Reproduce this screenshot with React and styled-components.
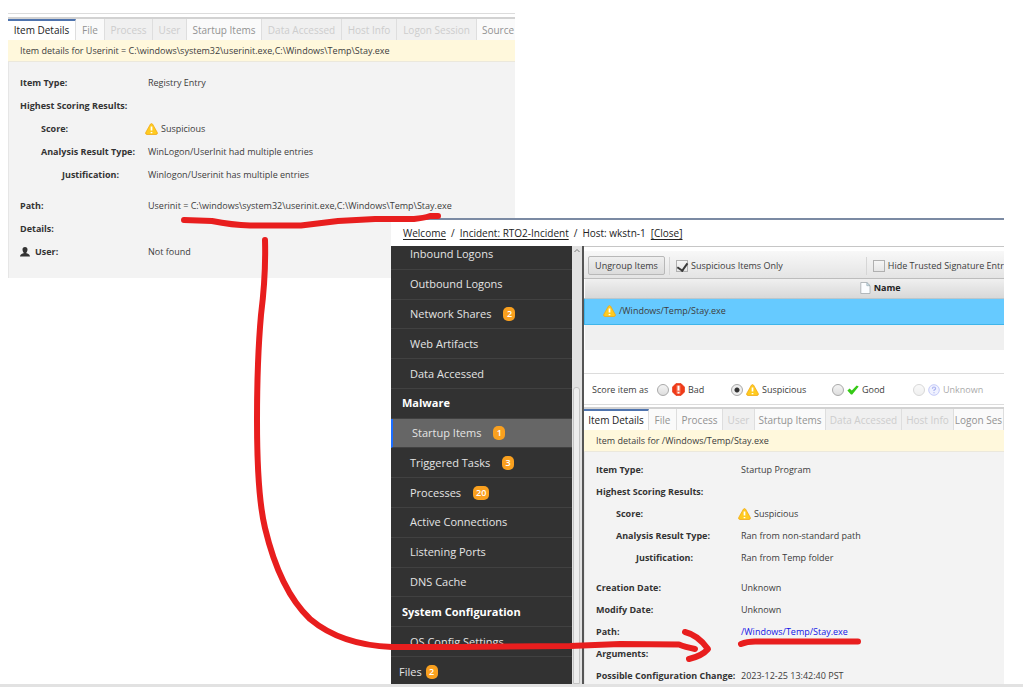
import React from 'react'
import styled, { createGlobalStyle, css } from 'styled-components'

const GlobalStyle = createGlobalStyle`
  * {
    box-sizing: border-box;
  }
  body {
    margin: 0;
    background: #fff;
    color: #3c3c3c;
    font-family: 'Open Sans', 'Noto Sans', sans-serif;
    font-size: 9px;
    line-height: 14px;
  }
  button, input {
    font: inherit;
    color: inherit;
    margin: 0;
  }
`

const Page = styled.main`
  position: relative;
  display: grid;
  grid-template-columns: 383fr 124fr 489fr;
  grid-template-rows: 205px 60px 1fr;
  min-height: 100vh;
  padding: 13px 19px 0 8px;
  border-bottom: 3px solid #e2e2e2;
`

const RegistryWindow = styled.section`
  grid-column: 1 / 3;
  grid-row: 1 / 3;
  display: flex;
  flex-direction: column;
  min-width: 0;
  overflow: hidden;
`

const IncidentWindow = styled.section`
  grid-column: 2 / 4;
  grid-row: 2 / 4;
  display: flex;
  flex-direction: column;
  min-width: 0;
  border-top: 2px solid #7b8aa3;
  background: #fff;
`

const Breadcrumb = styled.nav`
  display: flex;
  align-items: center;
  gap: 5px;
  height: 26px;
  padding: 0 12px;
  color: #222;
  font-size: 10px;
  white-space: nowrap;

  a {
    color: inherit;
    text-underline-offset: 2px;
  }
`

const Columns = styled.div`
  display: flex;
  flex: 1;
  min-height: 0;
`

const Sidebar = styled.aside`
  display: flex;
  flex-direction: column;
  flex: 0 0 181px;
  overflow: hidden;
  background: #323232;
  color: #e4e4e4;
  font-size: 11px;
`

/* scrolled a little, so the first entry is cut by the top edge */
const MenuList = styled.div`
  display: flex;
  flex-direction: column;
  flex: 1;
  margin-top: -6px;
`

const MenuItem = styled.button`
  display: flex;
  align-items: center;
  flex: 1 1 29px;
  gap: 12px;
  padding: 0 0 0 19px;
  border: 0;
  border-bottom: 1px solid #414141;
  background: none;
  text-align: left;
  white-space: nowrap;

  ${({ $active }) =>
    $active &&
    css`
      border-left: 2px solid #1a6dff;
      background: #666;
    `}
`

const MenuHeading = styled.h2`
  display: flex;
  align-items: center;
  flex: 1 1 29px;
  margin: 0;
  padding: 0 11px;
  border-bottom: 1px solid #414141;
  color: #fff;
  font-size: 11px;
  font-weight: 700;
`

const FilesButton = styled.button`
  display: flex;
  align-items: center;
  flex: 0 0 27px;
  gap: 4px;
  padding: 2px 8px 0;
  border: 0;
  background: none;
`

const Count = styled.span`
  min-width: 12px;
  padding: 0 3px;
  border-radius: 5px;
  background: #f9a01f;
  color: #fff;
  font-size: 9px;
  font-weight: 600;
  text-align: center;
`

const ScrollTrack = styled.div`
  display: flex;
  flex-direction: column;
  flex: 0 0 12px;
  border-right: 2px solid #555;
  background: #e2e2e2;

  svg {
    flex: none;
    width: 10px;
    height: 10px;
  }
`

const ScrollThumb = styled.div`
  flex: 1;
  margin: 131px 2px 0 1px;
  border: 1px solid #c4c4c4;
  border-radius: 3px 3px 0 0;
  background: #ededed;
`

const Content = styled.div`
  display: flex;
  flex-direction: column;
  flex: 1;
  min-width: 0;
  overflow: hidden;
  border-top: 1px solid #c6c6c6;
`

const Toolbar = styled.div`
  display: flex;
  align-items: center;
  height: 28px;
  margin-top: 4px;
  padding: 2px 0 0 4px;
  border-bottom: 1px solid #bdbdbd;
  background: linear-gradient(#f8f8f8, #e4e4e4);
  white-space: nowrap;
`

const ToolButton = styled.button`
  flex: none;
  width: 77px;
  height: 19px;
  padding: 0;
  border: 1px solid #b8b8b8;
  border-radius: 2px;
  background: linear-gradient(#efefef, #dcdcdc);
`

const ToolOption = styled.div`
  display: flex;
  align-items: center;
  flex: none;
  gap: 3px;
  height: 18px;
  margin-left: ${({ $far }) => ($far ? 'auto' : '4px')};
  padding-left: 6px;
  border-left: 1px solid #d6d6d6;
`

const CheckBox = styled.input`
  appearance: none;
  display: grid;
  place-items: center;
  flex: none;
  width: 12px;
  height: 12px;
  border: 1px solid #b0b0b0;
  background: linear-gradient(#f6f6f6, #e6e6e6);

  &:checked::after {
    content: '';
    width: 5px;
    height: 8px;
    margin-bottom: 3px;
    border: solid #3a3a3a;
    border-width: 0 2px 2px 0;
    transform: rotate(35deg);
  }
`

const TableFrame = styled.div`
  height: 95px;
  overflow: hidden;
  border-bottom: 1px solid #dcdcdc;
`

const ItemTable = styled.table`
  width: 141%;
  border-collapse: collapse;
  table-layout: fixed;

  th {
    height: 19px;
    padding: 0;
    border-bottom: 1px solid #b9c6cc;
    background: linear-gradient(#f0f0f0, #d8d8d8);
    color: #222;
  }
  td {
    height: 26px;
    padding: 0 0 0 18px;
  }
  tr:nth-child(even) td {
    background: #f0f0f0;
  }
  tr[aria-selected='true'] td {
    border: 1px solid #3fb5ea;
    background: #66caff;
  }
`

const IconText = styled.span`
  display: flex;
  align-items: center;
  justify-content: ${({ $centered }) => ($centered ? 'center' : 'flex-start')};
  gap: 3px;

  svg {
    flex: none;
  }
`

const ScoreBar = styled.div`
  display: flex;
  align-items: center;
  flex: none;
  height: 30px;
  padding: 1px 0 0 8px;
  white-space: nowrap;
`

const ScoreCaption = styled.span`
  width: 65px;
`

const ScoreOption = styled.label`
  display: flex;
  align-items: center;
  gap: 3px;
  width: ${({ $width }) => $width}px;
  opacity: ${({ $disabled }) => ($disabled ? 0.45 : 1)};
`

const Radio = styled.input`
  appearance: none;
  width: 12px;
  height: 12px;
  border: 1px solid #a9a9a9;
  border-radius: 50%;
  background: linear-gradient(#f4f4f4, #dedede);

  &:checked {
    background: radial-gradient(circle, #333 0 2px, #eee 3px);
  }
`

const Divider = styled.div`
  flex: none;
  height: ${({ $height }) => $height}px;
  border-top: 1px solid #dcdcdc;
  border-bottom: 2px solid #d2d2d2;
`

const TabRow = styled.div`
  display: flex;
  flex: none;
  height: 21px;
  background: #f0f0f0;
`

const Tab = styled.button`
  flex: none;
  width: ${({ $width }) => $width}px;
  padding: 0;
  border: 0;
  border-right: 1px solid #dedede;
  background: #fafafa;
  color: #929292;
  font-size: 10px;
  white-space: nowrap;

  &[aria-selected='true'] {
    padding-bottom: 2px;
    border-top: 2px solid #4f74ae;
    background: #fff;
    color: #222;
  }
  &:disabled {
    background: #f0f0f0;
    color: #cdcdcd;
  }
`

const Notice = styled.p`
  flex: none;
  margin: 0;
  padding: 4px 12px 3px;
  border-bottom: 1px solid #ebe8dc;
  background: #fff8dc;
  white-space: nowrap;
`

const Details = styled.dl`
  flex: 1;
  margin: 0;
  padding: ${({ $top }) => $top}px 11px 0;
  border-left: 1px solid #e6e6e6;
  background: #f3f3f3;
  white-space: nowrap;
`

const DetailRow = styled.div`
  display: grid;
  grid-template-columns: ${({ $labelWidth }) => $labelWidth}px 1fr;
  align-items: center;
  height: 14px;
  margin-top: ${({ $space, $group }) => ($group ? $space + 8 : $space)}px;

  dt {
    display: flex;
    align-items: center;
    gap: 5px;
    padding-left: ${({ $inset }) => $inset}px;
    color: #333;
    font-weight: 700;
  }
  dd {
    margin: 0 0 0 ${({ $icon }) => ($icon ? -3 : 0)}px;
  }
  a {
    color: #1414e6;
    text-decoration: none;
  }
`

const Annotations = styled.svg`
  position: absolute;
  inset: 0;
  width: 100%;
  height: 687px;
  pointer-events: none;
  fill: none;
  stroke: #e81e1e;
  stroke-width: 6;
  stroke-linecap: round;
  stroke-linejoin: round;
`

const WarningIcon = () => (
  <svg width="13" height="12" viewBox="0 0 13 12" aria-hidden="true">
    <path
      d="M5.4 1.2Q6.5 -.4 7.6 1.2L12.3 9.6Q12.7 11.4 11 11.5H2Q.3 11.4 .7 9.6Z"
      fill="#ffcb1f"
      stroke="#f0a818"
      strokeWidth=".8"
    />
    <path d="M6.5 3.6V7.4M6.5 9V10.2" stroke="#fff" strokeWidth="1.7" />
  </svg>
)

const BadIcon = () => (
  <svg width="13" height="13" viewBox="0 0 13 13" aria-hidden="true">
    <path d="M4 .5H9L12.5 4V9L9 12.5H4L.5 9V4Z" fill="#f03a17" stroke="#e0300f" strokeWidth=".6" />
    <path d="M4.500 2.300H8.500V10.700H4.500Z" fill="#f87a60" />
    <path d="M6.5 2.700V7.600M6.500 9V10.600" stroke="#fff" strokeWidth="1.8" />
  </svg>
)

const GoodIcon = () => (
  <svg width="12" height="10" viewBox="0 0 12 10" aria-hidden="true">
    <path d="M.4 5.4L2.6 3.6L4.8 5.6L9.7 .6L11.7 1.6L5.2 9.6H4Z" fill="#35c916" />
  </svg>
)

const UnknownIcon = () => (
  <svg width="12" height="12" viewBox="0 0 12 12" aria-hidden="true">
    <circle cx="6" cy="6" r="5.3" fill="#dfe3ff" stroke="#7482ef" strokeWidth=".9" />
    <path d="M4.4 4.7Q4.5 3 6 3T7.6 4.5Q7.6 5.4 6 6.2V7M6 8.2V9.3" fill="none" stroke="#4456e0" strokeWidth="1.2" />
  </svg>
)

const FileIcon = () => (
  <svg width="11" height="12" viewBox="0 0 11 12" aria-hidden="true">
    <path d="M.8 .5H6.8L10 3.7V11.5H.8Z" fill="#fbfdff" stroke="#a3a9ad" strokeWidth=".8" />
    <path d="M6.8 .5V3.7H10Z" fill="#cfe4ee" stroke="#8e9fa8" strokeWidth=".6" />
  </svg>
)

const UserIcon = () => (
  <svg width="10" height="10" viewBox="0 0 10 10" aria-hidden="true">
    <path
      d="M5 0C6.8 0 7.6 1.1 7.5 2.7C7.4 3.9 7 4.9 6.4 5.4V6.2C7.7 6.7 9.7 6.8 10 9.6H0C.3 6.8 2.3 6.7 3.6 6.2V5.4C3 4.9 2.6 3.9 2.5 2.7C2.4 1.1 3.2 0 5 0Z"
      fill="#333"
    />
  </svg>
)

const registryTabs = [
  { label: 'Item Details', width: 68, active: true },
  { label: 'File', width: 29 },
  { label: 'Process', width: 48, disabled: true },
  { label: 'User', width: 34, disabled: true },
  { label: 'Startup Items', width: 75 },
  { label: 'Data Accessed', width: 80, disabled: true },
  { label: 'Host Info', width: 55, disabled: true },
  { label: 'Logon Session', width: 80, disabled: true },
  { label: 'Source', width: 43 },
]

const incidentTabs = [
  { label: 'Item Details', width: 65, active: true },
  { label: 'File', width: 28 },
  { label: 'Process', width: 46 },
  { label: 'User', width: 32, disabled: true },
  { label: 'Startup Items', width: 71 },
  { label: 'Data Accessed', width: 76, disabled: true },
  { label: 'Host Info', width: 52, disabled: true },
  { label: 'Logon Ses', width: 50 },
]

const suspicious = (
  <IconText>
    <WarningIcon />
    Suspicious
  </IconText>
)

const registryDetails = [
  { label: 'Item Type:', value: 'Registry Entry' },
  { label: 'Highest Scoring Results:' },
  { label: 'Score:', value: suspicious, level: 1, icon: true },
  { label: 'Analysis Result Type:', value: 'WinLogon/UserInit had multiple entries', level: 1 },
  { label: 'Justification:', value: 'Winlogon/Userinit has multiple entries', level: 2 },
  { label: 'Path:', value: 'Userinit = C:\\windows\\system32\\userinit.exe,C:\\Windows\\Temp\\Stay.exe', group: true },
  { label: 'Details:' },
  { label: 'User:', value: 'Not found', user: true },
]

const incidentDetails = [
  { label: 'Item Type:', value: 'Startup Program' },
  { label: 'Highest Scoring Results:' },
  { label: 'Score:', value: suspicious, level: 1, icon: true },
  { label: 'Analysis Result Type:', value: 'Ran from non-standard path', level: 1 },
  { label: 'Justification:', value: 'Ran from Temp folder', level: 2 },
  { label: 'Creation Date:', value: 'Unknown', group: true },
  { label: 'Modify Date:', value: 'Unknown' },
  { label: 'Path:', value: <a href="#path">/Windows/Temp/Stay.exe</a> },
  { label: 'Arguments:' },
  { label: 'Possible Configuration Change:', value: '2023-12-25 13:42:40 PST' },
]

const menu = [
  { label: 'Inbound Logons' },
  { label: 'Outbound Logons' },
  { label: 'Network Shares', count: 2 },
  { label: 'Web Artifacts' },
  { label: 'Data Accessed' },
  { label: 'Malware', heading: true },
  { label: 'Startup Items', count: 1, active: true },
  { label: 'Triggered Tasks', count: 3 },
  { label: 'Processes', count: 20 },
  { label: 'Active Connections' },
  { label: 'Listening Ports' },
  { label: 'DNS Cache' },
  { label: 'System Configuration', heading: true },
  { label: 'OS Config Settings' },
]

function Tabs({ tabs }) {
  return (
    <TabRow role="tablist">
      {tabs.map(({ label, width, active, disabled }) => (
        <Tab key={label} role="tab" $width={width} aria-selected={!!active} disabled={disabled}>
          {label}
        </Tab>
      ))}
    </TabRow>
  )
}

function DetailList({ rows, labelWidth, space, top, indent }) {
  return (
    <Details $top={top}>
      {rows.map(({ label, value, level = 0, icon, group, user }) => (
        <DetailRow
          key={label}
          $labelWidth={labelWidth}
          $space={space}
          $inset={level * indent}
          $icon={icon}
          $group={group}
        >
          <dt>
            {user && <UserIcon />}
            {label}
          </dt>
          <dd>{value}</dd>
        </DetailRow>
      ))}
    </Details>
  )
}

export default function App() {
  return (
    <>
      <GlobalStyle />
      <Page>
        <RegistryWindow>
          <Divider $height={6} />
          <Tabs tabs={registryTabs} />
          <Notice>Item details for Userinit = C:\windows\system32\userinit.exe,C:\Windows\Temp\Stay.exe</Notice>
          <DetailList rows={registryDetails} labelWidth={128} space={9} top={5} indent={21} />
        </RegistryWindow>

        <IncidentWindow>
          <Breadcrumb>
            <a href="#welcome">Welcome</a>
            <span>/</span>
            <a href="#incident">Incident: RTO2-Incident</a>
            <span>/</span>
            <span>Host: wkstn-1</span>
            <a href="#close">[Close]</a>
          </Breadcrumb>
          <Columns>
            <Sidebar>
              <MenuList>
                {menu.map(({ label, count, heading, active }) =>
                  heading ? (
                    <MenuHeading key={label}>{label}</MenuHeading>
                  ) : (
                    <MenuItem key={label} $active={active}>
                      {label}
                      {count && <Count>{count}</Count>}
                    </MenuItem>
                  )
                )}
              </MenuList>
              <FilesButton>
                Files <Count>2</Count>
              </FilesButton>
            </Sidebar>
            <ScrollTrack>
              <svg viewBox="0 0 10 10" aria-hidden="true">
                <path d="M2.5 6L5 3.5L7.5 6" fill="none" stroke="#777" />
              </svg>
              <ScrollThumb />
            </ScrollTrack>
            <Content>
              <Toolbar>
                <ToolButton>Ungroup Items</ToolButton>
                <ToolOption>
                  <CheckBox type="checkbox" id="suspicious-only" defaultChecked />
                  <label htmlFor="suspicious-only">Suspicious Items Only</label>
                </ToolOption>
                <ToolOption $far>
                  <CheckBox type="checkbox" id="hide-trusted" />
                  <label htmlFor="hide-trusted">Hide Trusted Signature Entr</label>
                </ToolOption>
              </Toolbar>
              <TableFrame>
                <ItemTable>
                  <thead>
                    <tr>
                      <th>
                        <IconText $centered>
                          <FileIcon />
                          Name
                        </IconText>
                      </th>
                    </tr>
                  </thead>
                  <tbody>
                    <tr aria-selected="true">
                      <td>
                        <IconText>
                          <WarningIcon />
                          /Windows/Temp/Stay.exe
                        </IconText>
                      </td>
                    </tr>
                    <tr>
                      <td />
                    </tr>
                  </tbody>
                </ItemTable>
              </TableFrame>
              <ScoreBar role="radiogroup" aria-labelledby="score-caption">
                <ScoreCaption id="score-caption">Score item as</ScoreCaption>
                <ScoreOption $width={74}>
                  <Radio type="radio" name="score" />
                  <BadIcon />
                  Bad
                </ScoreOption>
                <ScoreOption $width={101}>
                  <Radio type="radio" name="score" defaultChecked />
                  <WarningIcon />
                  Suspicious
                </ScoreOption>
                <ScoreOption $width={81}>
                  <Radio type="radio" name="score" />
                  <GoodIcon />
                  Good
                </ScoreOption>
                <ScoreOption $width={80} $disabled>
                  <Radio type="radio" name="score" disabled />
                  <UnknownIcon />
                  Unknown
                </ScoreOption>
              </ScoreBar>
              <Divider $height={5} />
              <Tabs tabs={incidentTabs} />
              <Notice>Item details for /Windows/Temp/Stay.exe</Notice>
              <DetailList rows={incidentDetails} labelWidth={145} space={8} top={3} indent={20} />
            </Content>
          </Columns>
        </IncidentWindow>

        <Annotations viewBox="0 0 1023 687" preserveAspectRatio="none" aria-hidden="true">
          <path d="M184 220L212 221Q232 225 250 225.5H301L338 221L375 219H414Q424 218 430 216H438" />
          <path d="M265 240Q266 275 261 315Q257 360 257 420Q257 495 265 528C275 570 290 600 310 619C335 640 365 646 392 647L460 647L570 646L620 644L679 644.5Q685 647 695 649" />
          <path d="M685 632Q698 635 708 649Q702 656 689 659" />
          <path d="M741 644Q748 641 758 641.5H858" />
        </Annotations>
      </Page>
    </>
  )
}
